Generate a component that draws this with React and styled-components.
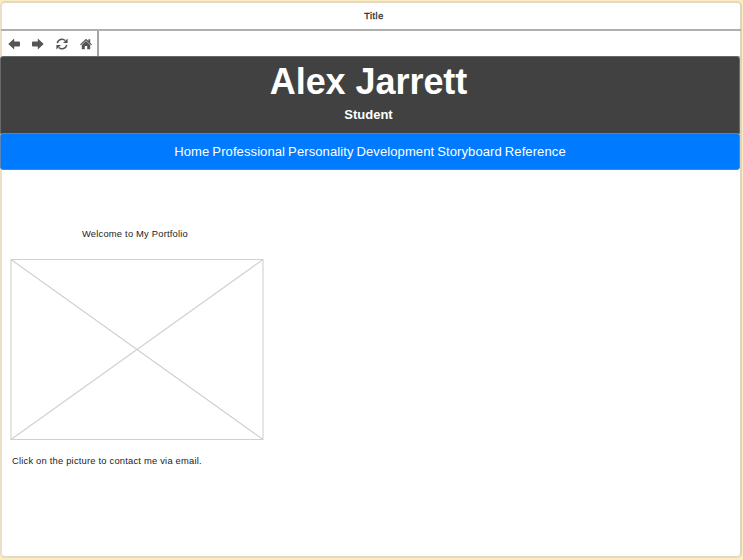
import React from "react";
import styled, { createGlobalStyle } from "styled-components";

const GlobalStyle = createGlobalStyle`
  * { box-sizing: border-box; }
  body {
    margin: 0;
    background: #fdecbd;
    font-family: "Liberation Sans", Arial, sans-serif;
    overflow: hidden;
  }
`;

const Stage = styled.div`
  width: 743px;
  height: 560px;
  padding: 1px 1px 2px 0;
`;

const BrowserWindow = styled.div`
  height: 557px;
  background: #fff;
  border: 2px solid #e2d9c8;
  border-left-color: #ecdfc8;
  border-right-color: #ddd3c2;
  border-radius: 5px;
  display: flex;
  flex-direction: column;
`;

const TitleBar = styled.header`
  height: 28px;
  flex: none;
  border-bottom: 2px solid #adb0ae;
  margin: 0 -1px;
  padding-top: 6px;
  padding-left: 6px;
  text-align: center;
  font-size: 9px;
  line-height: 14px;
  letter-spacing: 0.6px;
  color: #333;
  -webkit-text-stroke: 0.35px #333;
`;

const Toolbar = styled.div`
  height: 26px;
  flex: none;
  display: flex;
`;

const Controls = styled.div`
  width: 97px;
  border-right: 2px solid #a3a3a3;
  display: flex;
  gap: 12px;
  padding: 7px 0 0 6px;
  color: #555;
`;

const Icon = styled.svg`
  width: 12px;
  height: 12px;
  flex: none;
  fill: currentColor;
`;

const Address = styled.div`
  flex: 1;
  border-bottom: 1px solid #b9b9b9;
`;

const Banner = styled.div`
  height: 78px;
  flex: none;
  width: 740px;
  margin-left: -2px;
  margin-top: -1px;
  background: #414141;
  border: 1px solid #666a68;
  border-radius: 3px 3px 0 0;
  text-align: center;
  color: #fff;
  padding-top: 5px;
  padding-right: 3px;
`;

const Name = styled.h1`
  margin: 0;
  font-size: 36px;
  line-height: 40px;
  font-weight: bold;
  letter-spacing: -0.05px;
`;

const Role = styled.div`
  font-size: 13px;
  line-height: 16px;
  font-weight: bold;
  margin-top: 5px;
`;

const Nav = styled.nav`
  height: 37px;
  flex: none;
  width: 740px;
  margin-left: -2px;
  margin-top: -1px;
  background: #007bff;
  border: 1px solid #5b83b5;
  border-radius: 3px;
  display: flex;
  justify-content: center;
  padding: 10px 0 0;
  gap: 3px;
  font-size: 13px;
  line-height: 16px;
  letter-spacing: 0.1px;
  color: #fff;
`;

const Content = styled.main`
  padding: 57px 0 0 8px;
  font-size: 9.4px;
  line-height: 14px;
  color: #222;
`;

const Welcome = styled.div`
  width: 250px;
  text-align: center;
  letter-spacing: 0.2px;
`;

const Placeholder = styled.svg`
  display: block;
  width: 254px;
  height: 181px;
  margin: 18px 0 14px;
  fill: none;
  stroke: #d0d0d0;
`;

const Caption = styled.div`
  padding-left: 2px;
  letter-spacing: 0.2px;
`;

const links = ["Home", "Professional", "Personality", "Development", "Storyboard", "Reference"];

export default function App() {
  return (
    <Stage>
      <GlobalStyle />
      <BrowserWindow>
        <TitleBar>Title</TitleBar>
        <Toolbar>
          <Controls>
            <Icon viewBox="0 0 12 12">
              <path d="M.3 6 6.2.4V3.5H11q1 0 1 1v3q0 1-1 1H6.2v3.1Z" />
            </Icon>
            <Icon viewBox="0 0 12 12">
              <path d="M11.7 6 5.8.4V3.5H1q-1 0-1 1v3q0 1 1 1h4.8v3.1Z" />
            </Icon>
            <Icon viewBox="0 0 12 12">
              <path d="M1.3 5.2A4.7 4.7 0 0 1 9.2 2.5M10.7 6.8A4.7 4.7 0 0 1 2.8 9.5" fill="none" stroke="currentColor" strokeWidth="1.5" />
              <path d="M11.6.4V5H7ZM.4 11.6V7H5Z" />
            </Icon>
            <Icon viewBox="0 0 12 12">
              <path d="M6 .7 8.4 3V1.2h1.8v3.5L12 6.4l-.8.9L6 2.4.8 7.3 0 6.4Z" />
              <path d="m6 3 4.2 4v4.3H7.2V8H4.8v3.3h-3V7Z" />
            </Icon>
          </Controls>
          <Address />
        </Toolbar>
        <Banner>
          <Name>Alex Jarrett</Name>
          <Role>Student</Role>
        </Banner>
        <Nav>
          {links.map((label) => (
            <span key={label}>{label}</span>
          ))}
        </Nav>
        <Content>
          <Welcome>Welcome to My Portfolio</Welcome>
          <Placeholder viewBox="0 0 254 181">
            <path d="M1 .5h252v180H1ZM1 .5l252 180M253 .5 1 180.5" strokeWidth="1.1" />
          </Placeholder>
          <Caption>Click on the picture to contact me via email.</Caption>
        </Content>
      </BrowserWindow>
    </Stage>
  );
}
